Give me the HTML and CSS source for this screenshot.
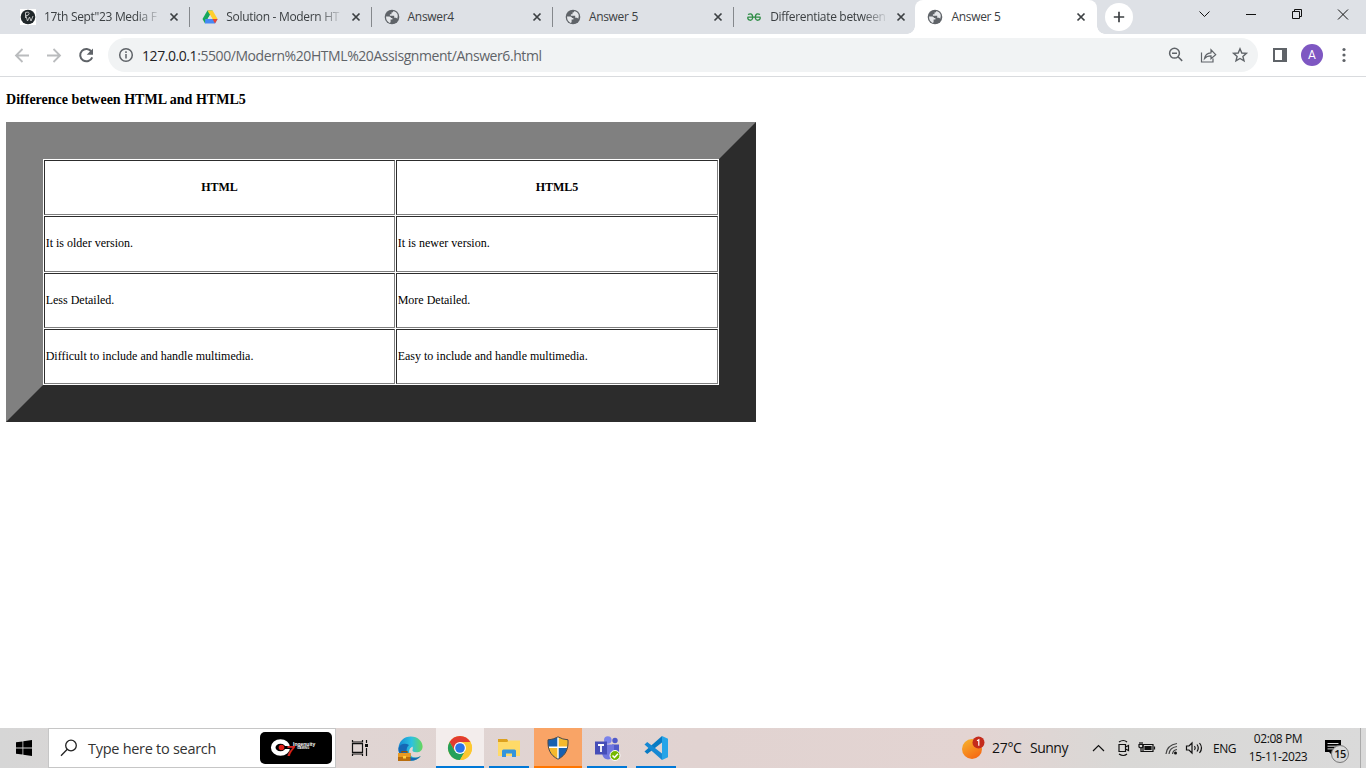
FILE: index.html
```html
<!DOCTYPE html>
<html lang="en">
<head>
<meta charset="utf-8">
<title>Answer 5</title>
<link rel="stylesheet" href="styles.css">
</head>
<body>
<svg class="defs" width="0" height="0">
  <symbol id="globe" viewBox="0 0 16 16"><circle cx="8" cy="8" r="7.300" fill="#5f6368"/><path d="M2 7.600h3.300q1.500.1 1.800 1.300h1.300v1.700H6.600v2.600l-1 .8Q2 12.300 2 7.600zM9.500 2q-.2 1.600-2 1.600v1.600H5.900v1.500h4.300v2h1.700q1.200.2 1.300 1.200Q15.500 4.200 9.500 2z" fill="#e4e6e9"/></symbol>
  <symbol id="close" viewBox="0 0 10 10"><path d="M1.500 1.500l7 7m0-7l-7 7" stroke="#3c4043" stroke-width="1.7"/></symbol>
</svg>
<header class="tabs">
  <div class="tab"><svg class="favicon" viewBox="0 0 16 16"><path fill="#fff" d="M0 0h16v16H0z"/><circle cx="8" cy="8" r="7.300" fill="#20272a"/><path d="M5.500 9V3.500q4-1 3.600 1.200T6 6.500M6 7l1.500 5L9.500 8l1.500 4L13 7" fill="none" stroke="#ccc" stroke-width=".9"/></svg><span class="title fade">17th Sept"23 Media F</span><svg class="x"><use href="#close"/></svg></div>
  <div class="tab"><svg class="favicon" viewBox="0 0 16 16"><path d="M5.400 1.500h5.200L8 6 3 14.400.5 10z" fill="#16a75c"/><path d="M5.400 1.500h5.200l5 8.600h-5.100z" fill="#ffcf2d"/><path d="M3.200 10h12.400L13 14.500H3z" fill="#4688f4"/><path d="M10.500 10h5.100L13 14.500z" fill="#ea4335"/><path d="M8 6.100l2.400 4H5.600z" fill="#dee1e6"/></svg><span class="title fade">Solution - Modern HT</span><svg class="x"><use href="#close"/></svg></div>
  <div class="tab"><svg class="favicon"><use href="#globe"/></svg><span class="title">Answer4</span><svg class="x"><use href="#close"/></svg></div>
  <div class="tab"><svg class="favicon"><use href="#globe"/></svg><span class="title">Answer 5</span><svg class="x"><use href="#close"/></svg></div>
  <div class="tab last"><svg class="favicon" viewBox="0 0 16 16"><path d="M1.500 8.200h13M2 5.500q4.300-2 4.800 2.700Q6.400 11.500 4 11.200 1.700 11 1.700 8.200M14 5.500q-4.300-2-4.800 2.700.4 3.300 2.800 3 2.300-.2 2.300-3" fill="none" stroke="#2f8d46" stroke-width="1.300"/></svg><span class="title fade">Differentiate between</span><svg class="x"><use href="#close"/></svg></div>
  <div class="tab active"><svg class="favicon"><use href="#globe"/></svg><span class="title">Answer 5</span><svg class="x"><use href="#close"/></svg></div>
  <div class="newtab"><svg width="12" height="12"><path d="M6 .8v10.400M.8 6h10.400" stroke="#3c4043" stroke-width="1.700"/></svg></div>
  <svg class="winbtns" width="150" height="28" fill="none" stroke="#111"><path d="M4.500 11.500l5 5 5-5M51 14.500h10M97.500 11.500h7v7h-7zM99.500 11.500v-2h7v7h-2M143 9.500l10 10m0-10l-10 10"/></svg>
</header>
<nav class="toolbar">
  <svg class="navicons" width="108" height="42" fill="none" stroke="#babcbe" stroke-width="1.800"><path d="M29 21.500H16m6.500-6.500l-6.500 6.500 6.500 6.500M47 21.500h13m-6.500-6.500l6.500 6.500-6.500 6.500"/><path d="M91.500 17.600a6.200 6.200 0 1 0 .7 5.700" stroke="#5f6368" stroke-width="2"/><path d="M93 14.500v6.300h-6.300z" fill="#5f6368" stroke="none"/></svg>
  <div class="omnibox">
    <svg width="16" height="16" fill="none" stroke="#5f6368" stroke-width="1.500"><circle cx="8" cy="8" r="6.300"/><path d="M8 7v4.500M8 4.300v1.600"/></svg>
    <span class="url"><b>127.0.0.1</b>:5500/Modern%20HTML%20Assisgnment/Answer6.html</span>
    <svg class="acts" width="82" height="20" fill="none" stroke="#5f6368" stroke-width="1.300"><circle cx="6.500" cy="8.200" r="4.900" stroke-width="1.500"/><path d="M4 8.200h5M10 11.700l4.200 4.200" stroke-width="1.500"/><path d="M33.500 7.500v9.500h11.500v-3.500M36.500 13.500q.8-5.200 6.500-5.700V4.800l4.700 4.800-4.700 4.100v-2.800q-4.300 0-6.500 2.600z" stroke-width="1.200"/><path d="M72 3.700l1.800 4.300 4.600.4-3.500 3 1.100 4.500-4-2.400-4 2.400 1.100-4.500-3.500-3 4.600-.4z" stroke-width="1.400"/></svg>
  </div>
  <svg class="panel" width="14" height="14"><path d="M1 1h12v12H1z" fill="#fff" stroke="#5f6368" stroke-width="2"/><path d="M9 1h4v12H9z" fill="#5f6368"/></svg>
  <span class="avatar">A</span>
  <svg class="menu" width="4" height="16" fill="#5f6368"><circle cx="2" cy="2.500" r="1.600"/><circle cx="2" cy="8" r="1.600"/><circle cx="2" cy="13.500" r="1.600"/></svg>
</nav>
<main class="page">
  <h3>Difference between HTML and HTML5</h3>
  <div class="table">
    <div class="cell head">HTML</div><div class="cell head">HTML5</div>
    <div class="cell second">It is older version.</div><div class="cell second">It is newer version.</div>
    <div class="cell">Less Detailed.</div><div class="cell">More Detailed.</div>
    <div class="cell">Difficult to include and handle multimedia.</div><div class="cell">Easy to include and handle multimedia.</div>
  </div>
</main>
<footer class="taskbar">
  <div class="start"><svg width="16" height="16"><path d="M0 2.300l6.500-.9v6.100H0zM7.300 1.300L16 0v7.500H7.300zM0 8.400h6.500v6.100L0 13.700zM7.300 8.400H16V16l-8.700-1.300z"/></svg></div>
  <div class="search">
    <svg width="18" height="18" fill="none" stroke="#222" stroke-width="1.300"><circle cx="11" cy="6.500" r="5.300"/><path d="M7.300 10.300L1 16.800"/></svg>
    <span class="hint">Type here to search</span>
    <div class="promo"><svg width="18" height="18"><ellipse cx="9.500" cy="8.500" rx="7.300" ry="6" fill="none" stroke="#fff" stroke-width="4.600"/><circle cx="10.500" cy="8.500" r="2.800" fill="#e01b16"/><path d="M14 7h6v3h-6z" fill="#000"/></svg><span class="seven">7</span><span class="brand"><span class="name">Ingenuity</span><span class="sub">GAMING</span></span></div>
  </div>
  <div class="app"><svg width="18" height="16" fill="none" stroke="#111" stroke-width="1.200"><path d="M1.500 3.600h10v8.800h-10zM1.500 0v2h10V0M1.500 16v-2h10v2M15.500 0v3M15.500 8v8"/><path d="M14 4h3v3h-3z" fill="#111" stroke="none"/></svg></div>
  <div class="app edge"><svg width="25" height="25" viewBox="0 0 25 25"><defs><linearGradient id="eg" x1="0" x2="1"><stop offset="0" stop-color="#148bd4"/><stop offset=".55" stop-color="#2dc2df"/><stop offset="1" stop-color="#66d759"/></linearGradient></defs><path d="M.5 12C1 5 6 .4 12.800.4c7 0 12 5 11.800 10.400-.2 5-5 6.700-9.200 5.200-2.500-1-.2-2.500-1-5-3 1-4 4-2.500 7 2 4 6 4.500 11 2-2.500 3-6 4.800-10 4.800C5 24.800 0 19 .5 12z" fill="url(#eg)"/><path d="M.5 12C2 8 7 6.500 11 9c-3.500 3-3 8 .5 11.200 3 2.500 7 2 11.400-.2-2.500 3-6 4.800-10 4.800C5 24.800 0 19 .5 12z" fill="#1668b5"/><path d="M14.500 10.500c-2.500 1.500-3 4.500-1 7 2.500 2.500 6.500 2.500 9.500.5l1-2.500c-2.500 1.300-6 1.500-8.500.3-2-1-.5-2.500-1-5.300z" fill="#e3d5d4"/><path d="M0 17h12.500v8H0z" fill="#b96d0d"/><path d="M0 17h12.500v4H0z" fill="#e79a22"/><path d="M4 17v-1.500h5V17" fill="none" stroke="#8c510b" stroke-width="1.200"/><path d="M5 20h3v2.500H5z" fill="#ffce3d"/></svg></div>
  <div class="app on light"><svg width="24" height="24" viewBox="0 0 24 24"><circle cx="12" cy="12" r="12" fill="#fc3"/><path d="M1.600 6A12 12 0 0 1 22.400 6H12L6.800 15z" fill="#e23b30"/><path d="M1.600 6A12 12 0 0 0 12 24l5.200-9-10.400 0z" fill="#25a05a"/><path d="M12 24A12 12 0 0 0 22.400 6H12l5.200 9z" fill="#fdc72f"/><circle cx="12" cy="12" r="6" fill="#fff"/><circle cx="12" cy="12" r="4.800" fill="#2b73e8"/></svg></div>
  <div class="app on"><svg width="22" height="20" viewBox="0 0 22 20"><path d="M0 1h9l2 3H0z" fill="#dda11d"/><path d="M0 4h9l2-1.500h11V18H0z" fill="#ffda68"/><path d="M4 19v-6q0-1.500 1.500-1.500h11q1.500 0 1.500 1.500v6h-4v-3.500H8V19z" fill="#3394dc"/></svg></div>
  <div class="app on alert"><svg width="22" height="24" viewBox="0 0 22 24"><path d="M11 .8Q15.500 3.500 21 3.800c.5 9-2 15.500-10 19.400C3 19.300.5 12.800 1 3.800 6.500 3.500 11 .8 11 .8z" fill="#f5b92d"/><path d="M1 3.800Q6.500 3.500 11 .8V11H1.400Q.8 8 1 3.800zM11 11h9.600q-1.800 8.500-9.600 12.200z" fill="#1760b0"/><path d="M11 1v22M1.500 11.200h19" stroke="#fff" stroke-width="1.400"/><path d="M11 .8Q15.500 3.500 21 3.800c.5 9-2 15.500-10 19.400C3 19.300.5 12.800 1 3.800 6.500 3.500 11 .8 11 .8z" fill="none" stroke="#4b4a4c"/></svg></div>
  <div class="app on"><svg width="25" height="25" viewBox="0 0 25 25"><circle cx="20" cy="4.500" r="2.700" fill="#5059c9"/><circle cx="12.800" cy="4" r="3.800" fill="#7b83eb"/><path d="M17 8.500h7V15q0 4-3.500 4.500H17z" fill="#5059c9"/><path d="M7 8.500h12V17q-1 6.500-6 6.500t-6-6.500z" fill="#7177df"/><path d="M0 5.500h12v13H0z" fill="#464eb8"/><path d="M3 9h6M6 9v7" stroke="#fff" stroke-width="1.800"/><circle cx="20" cy="19.500" r="5" fill="#75b800" stroke="#fff"/><path d="M17.500 19.500l2 2 3.500-3.700" fill="none" stroke="#fff" stroke-width="1.500"/></svg></div>
  <div class="app on"><svg width="24" height="24" viewBox="0 0 24 24"><path d="M18 0v6.500L3.200 18 .5 15.600z" fill="#087bc4"/><path d="M18 24v-6.500L3.200 6 .5 8.400z" fill="#1688d3"/><path d="M18 0l6 2.800v18.400L18 24z" fill="#25a4e8"/></svg></div>
  <div class="weather"><svg width="23" height="23" viewBox="0 0 23 23"><defs><linearGradient id="sun" x2=".6" y2="1"><stop stop-color="#f6b62d"/><stop offset="1" stop-color="#f66b14"/></linearGradient></defs><circle cx="10" cy="12" r="10" fill="url(#sun)"/><circle cx="16.500" cy="5.500" r="6" fill="#c42b1c"/><path d="M15 3.700l1.800-1v6" fill="none" stroke="#fff" stroke-width="1.200"/></svg><span class="temp">27°C</span><span class="sky">Sunny</span></div>
  <svg class="tray" width="116" height="20" fill="none" stroke="#111" stroke-width="1.200"><path d="M1 13l5.500-5.500L12 13"/><path d="M27 6.500h6.500v7H27zM33.500 9l3-1.500v5l-3-1.500M27 4q4.500-3 8 0M27 16q4.500 3 8 0"/><path d="M51 6.500h10v7H51z"/><path d="M53 8.500h6v3h-6z" fill="#111"/><path d="M62.500 8.500v3"/><path d="M47 6.500h4V9q-2 1.500-4 0zM48 4v2.500m2-2.500v2.500m-1 3.500v3.500h2"/><path d="M74 16Q75 7 85 5.500M77 16q.5-6.500 8-7.500M80.500 16q.5-4 4.500-4.500" stroke="#444"/><circle cx="83.500" cy="15" r="1.500" fill="#111" stroke="none"/><path d="M94.500 8h2.500l3-3v10l-3-3h-2.500zM102.500 8q1.500 2 0 4M105 6.500q2.500 3.500 0 7M107.500 5q4 5 0 10"/></svg>
  <span class="lang">ENG</span>
  <div class="clock"><span class="time">02:08 PM</span><span class="date">15-11-2023</span></div>
  <div class="notice"><svg width="18" height="18"><path d="M1 1h16v12H8v3l-3-3H1z"/><path d="M3.500 4.500h11M3.500 7.200h11M3.500 9.900h7" stroke="#ddd"/></svg><span class="count">15</span></div>
  <div class="peek"></div>
</footer>
</body>
</html>
```
FILE: styles.css
```css
* { box-sizing: border-box; }
body { margin: 0; width: 1366px; height: 768px; overflow: hidden; display: flex; flex-direction: column; background: #fff; font-family: "Open Sans", "Noto Sans", sans-serif; color: #111; }
svg { display: block; flex: none; overflow: visible; }
.defs { position: absolute; }
.tabs { height: 34px; background: #dee1e6; display: flex; padding-left: 9px; }
.tab { width: 181.3px; flex: none; display: flex; align-items: center; padding-left: 12px; position: relative; }
.tab:first-child { padding-left: 11px; }
.tab:first-child .title { width: 117px; }
.tab::after { content: ""; width: 1px; height: 20px; background: #85888c; margin-left: 10px; }
.tab.last::after, .tab.active::after { visibility: hidden; }
.tab.active { background: #fff; border-radius: 8px 8px 0 0; }
.tab.active::before { content: ""; position: absolute; left: -8px; right: -8px; bottom: 0; height: 8px; background: radial-gradient(circle at 0 0, transparent 7.5px, #fff 8px) left / 8px 8px no-repeat, radial-gradient(circle at 100% 0, transparent 7.5px, #fff 8px) right / 8px 8px no-repeat; }
.favicon { width: 16px; height: 16px; }
.title { width: 116px; margin-left: 8px; font-size: 12px; line-height: 18px; color: #3c4043; white-space: nowrap; letter-spacing: -.32px; }
.fade { -webkit-mask-image: linear-gradient(90deg, #000 80%, rgba(0,0,0,.1)); mask-image: linear-gradient(90deg, #000 80%, rgba(0,0,0,.1)); }
.x { width: 10px; height: 10px; margin-left: 10px; }
.newtab { width: 28px; height: 28px; border-radius: 50%; background: #fff; margin: 3px 0 0 8.200px; display: flex; align-items: center; justify-content: center; }
.winbtns { margin-left: 62px; }
.toolbar { height: 43px; border-bottom: 1px solid #d9dbde; display: flex; align-items: center; background: #fff; }
.omnibox { width: 1150px; height: 34px; border-radius: 17px; background: #f1f3f4; display: flex; align-items: center; padding-left: 10px; }
.url { margin-left: 8px; padding-top: 1px; font-size: 14px; line-height: 20px; color: #5f6368; letter-spacing: -.43px; white-space: nowrap; }
.url b { font-weight: 400; color: #202124; }
.acts { margin-left: auto; margin-right: 8px; }
.panel { margin-left: 15px; }
.avatar { margin-left: 14px; width: 22px; height: 22px; border-radius: 50%; background: #7e57c2; color: #fff; font: 12px/22px Roboto, sans-serif; text-align: center; }
.menu { margin-left: 19px; }
.page { height: 651px; padding-left: 6px; font-family: "Liberation Serif", serif; color: #000; }
h3 { margin: 14px 0 15px; font-size: 14.04px; line-height: 16px; }
.table { width: 750px; height: 300px; border: 37px solid; border-color: #808080 #2c2c2c #2c2c2c #808080; padding: 1px; display: grid; grid-template: 55px 56px 55px 55px / 351px 322px; gap: 1px; }
.cell { border: 1px solid; border-color: #2c2c2c #808080 #808080 #2c2c2c; padding: 0 0 0 .7px; font-size: 12px; display: flex; align-items: center; }
.second { padding-bottom: 2px; }
.head { justify-content: center; font-weight: 700; padding-left: 0; }
.taskbar { height: 40px; display: flex; align-items: center; background: linear-gradient(90deg, #d6d6d6 0, #e0d5d3 340px, #e1d3d1 700px, #e3d4d2 980px, #d9d8d6 1120px, #dadada 100%); }
.start { width: 48px; display: flex; justify-content: center; }
.search { width: 288px; height: 40px; border: 1px solid #c6c6c6; background: #fff; display: flex; align-items: center; padding-left: 11px; }
.hint { width: 172px; margin-left: 10px; padding-top: 1px; font-size: 14.5px; line-height: 20px; letter-spacing: -.28px; color: #333; white-space: nowrap; }
.promo { width: 72px; height: 32px; border-radius: 5px; background: #000; color: #fff; display: flex; align-items: center; padding-left: 11px; }
.seven { width: 8px; color: #d62722; font: italic bold 15px/14px "Liberation Sans", sans-serif; margin: 6px 0 0 -3px; }
.brand { display: flex; flex-direction: column; font-family: "Liberation Sans", sans-serif; font-weight: bold; margin: -5px 0 0 -1px; }
.name { font-size: 5px; line-height: 5px; }
.sub { font-size: 3px; line-height: 3px; margin-left: 4px; }
.app { width: 48px; height: 40px; flex: none; display: flex; align-items: center; justify-content: center; margin-right: 1px; }
.edge { width: 50px; }
.on { background: linear-gradient(#0078d7, #0078d7) bottom / 40px 2px no-repeat; }
.light { background: linear-gradient(#0078d7, #0078d7) bottom / 48px 2px no-repeat, #f3edec; }
.alert { background: linear-gradient(#ff7600, #ff7600) bottom / 48px 2px no-repeat, #f9a466; }
.weather { margin-left: 281px; display: flex; align-items: center; font-size: 14px; line-height: 20px; width: 130px; }
.temp { width: 38px; margin-left: 7px; letter-spacing: -.3px; }
.sky { letter-spacing: -.5px; }
.tray { flex: none; }
.lang { width: 30px; font-size: 12px; margin-left: 5px; letter-spacing: -.5px; }
.clock { width: 70px; display: flex; flex-direction: column; align-items: center; font-size: 12px; line-height: 18px; white-space: nowrap; }
.time, .date { letter-spacing: -.4px; }
.notice { position: relative; width: 18px; margin-left: 11px; }
.count { position: absolute; left: 7px; top: 6px; width: 18px; height: 18px; border: 1px solid #777; border-radius: 50%; background: #d8d8d8; font-size: 11px; font-weight: 600; line-height: 16px; text-align: center; letter-spacing: -.5px; }
.peek { width: 1px; height: 40px; margin-left: 18px; background: #aaa; }
```
